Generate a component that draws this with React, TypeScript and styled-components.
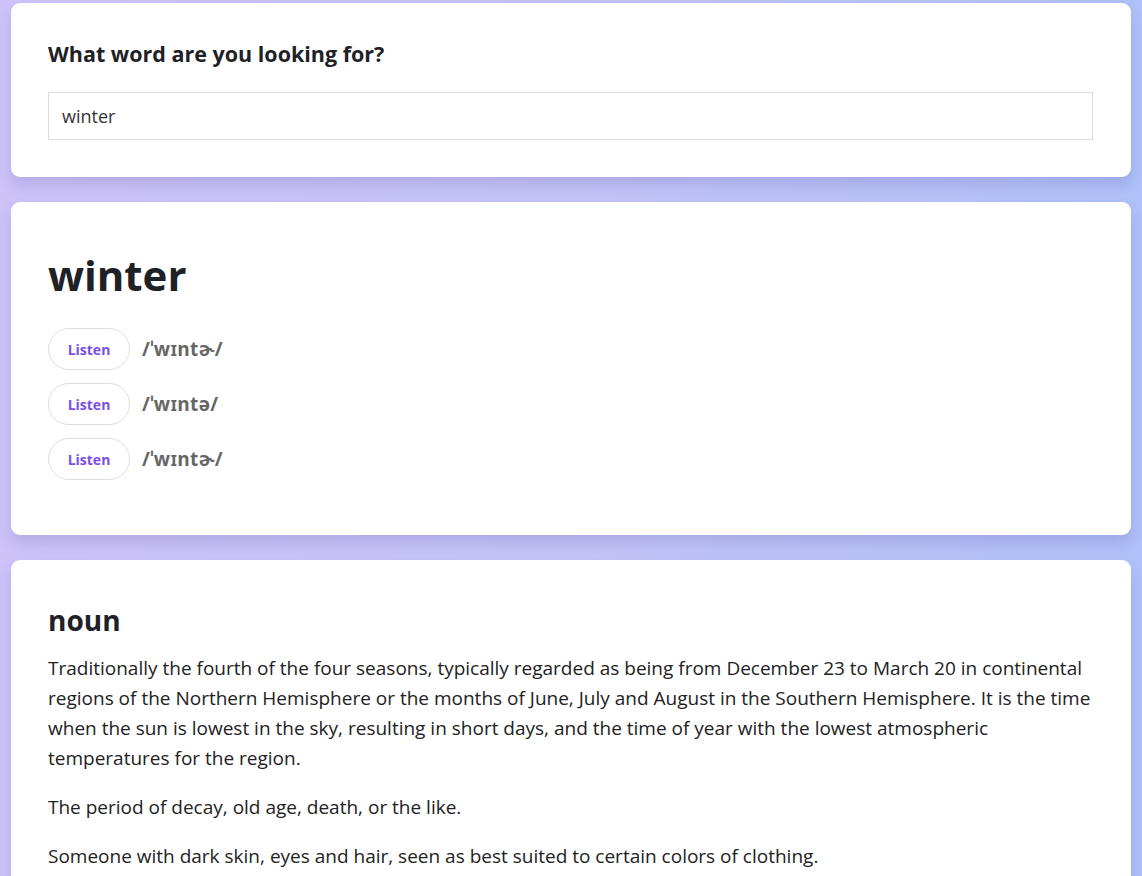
import React from "react";
import styled, { createGlobalStyle } from "styled-components";

const Global = createGlobalStyle`
  html, body { margin: 0; padding: 0; }
  body {
    min-height: 100vh;
    background: linear-gradient(90deg, #cdc3f9 0%, #c3c3f8 50%, #afc1f8 100%);
    font-family: "Open Sans", "Noto Sans", sans-serif;
    color: #222;
    overflow: hidden;
  }
`;

const Page = styled.main`
  width: 1120px;
  margin: 0 auto;
  padding-top: 3px;
  display: flex;
  flex-direction: column;
  gap: 25px;
`;

const Card = styled.section<{ $pad?: string }>`
  background: #fff;
  border-radius: 9px;
  padding: ${(p) => p.$pad ?? "37px 38px 37px 37px"};
  box-shadow: 0 8px 14px rgba(70, 50, 140, 0.16);
  display: flex;
  flex-direction: column;
`;

const Question = styled.h2`
  margin: 0 0 24px;
  font-size: 21.5px;
  line-height: 28px;
  font-weight: 700;
  color: #1e2126;
`;

const SearchInput = styled.input`
  box-sizing: border-box;
  height: 48px;
  width: 100%;
  border: 1px solid #dcdcdc;
  padding: 0 13px;
  font-family: inherit;
  font-size: 18px;
  color: #333;
  outline: none;
`;

const Word = styled.h1`
  margin: 0 0 23px;
  font-size: 42px;
  line-height: 60px;
  font-weight: 700;
  color: #1e2126;
`;

const Phonetics = styled.div`
  display: flex;
  flex-direction: column;
  gap: 13px;
`;

const PhoneticRow = styled.div`
  display: flex;
  align-items: center;
  gap: 12px;
`;

const ListenButton = styled.button`
  box-sizing: border-box;
  width: 82px;
  height: 42px;
  border: 1px solid #dddddd;
  border-radius: 21px;
  background: #fff;
  color: #7b4fe6;
  font-family: inherit;
  font-weight: 700;
  font-size: 14px;
  cursor: pointer;
`;

const Phonetic = styled.span`
  font-size: 19px;
  font-weight: 700;
  color: #666;
  letter-spacing: 0.3px;
`;

const PartOfSpeech = styled.h3`
  margin: 0 0 16px;
  font-size: 28px;
  line-height: 34px;
  font-weight: 700;
  color: #1e2126;
`;

const Definition = styled.p`
  margin: 0 0 19px;
  font-size: 19px;
  line-height: 30px;
  color: #222;
`;

const phonetics = ["/ˈwɪntɚ/", "/ˈwɪntə/", "/ˈwɪntɚ/"];

const definitions = [
  "Traditionally the fourth of the four seasons, typically regarded as being from December 23 to March 20 in continental regions of the Northern Hemisphere or the months of June, July and August in the Southern Hemisphere. It is the time when the sun is lowest in the sky, resulting in short days, and the time of year with the lowest atmospheric temperatures for the region.",
  "The period of decay, old age, death, or the like.",
  "Someone with dark skin, eyes and hair, seen as best suited to certain colors of clothing.",
];

export default function App() {
  return (
    <>
      <Global />
      <Page>
        <Card $pad="37px 38px 37px 37px">
          <Question>What word are you looking for?</Question>
          <SearchInput defaultValue="winter" />
        </Card>
        <Card $pad="43px 38px 55px 37px">
          <Word>winter</Word>
          <Phonetics>
            {phonetics.map((p, i) => (
              <PhoneticRow key={i}>
                <ListenButton>Listen</ListenButton>
                <Phonetic>{p}</Phonetic>
              </PhoneticRow>
            ))}
          </Phonetics>
        </Card>
        <Card $pad="43px 38px 37px 37px">
          <PartOfSpeech>noun</PartOfSpeech>
          {definitions.map((d, i) => (
            <Definition key={i}>{d}</Definition>
          ))}
        </Card>
      </Page>
    </>
  );
}
